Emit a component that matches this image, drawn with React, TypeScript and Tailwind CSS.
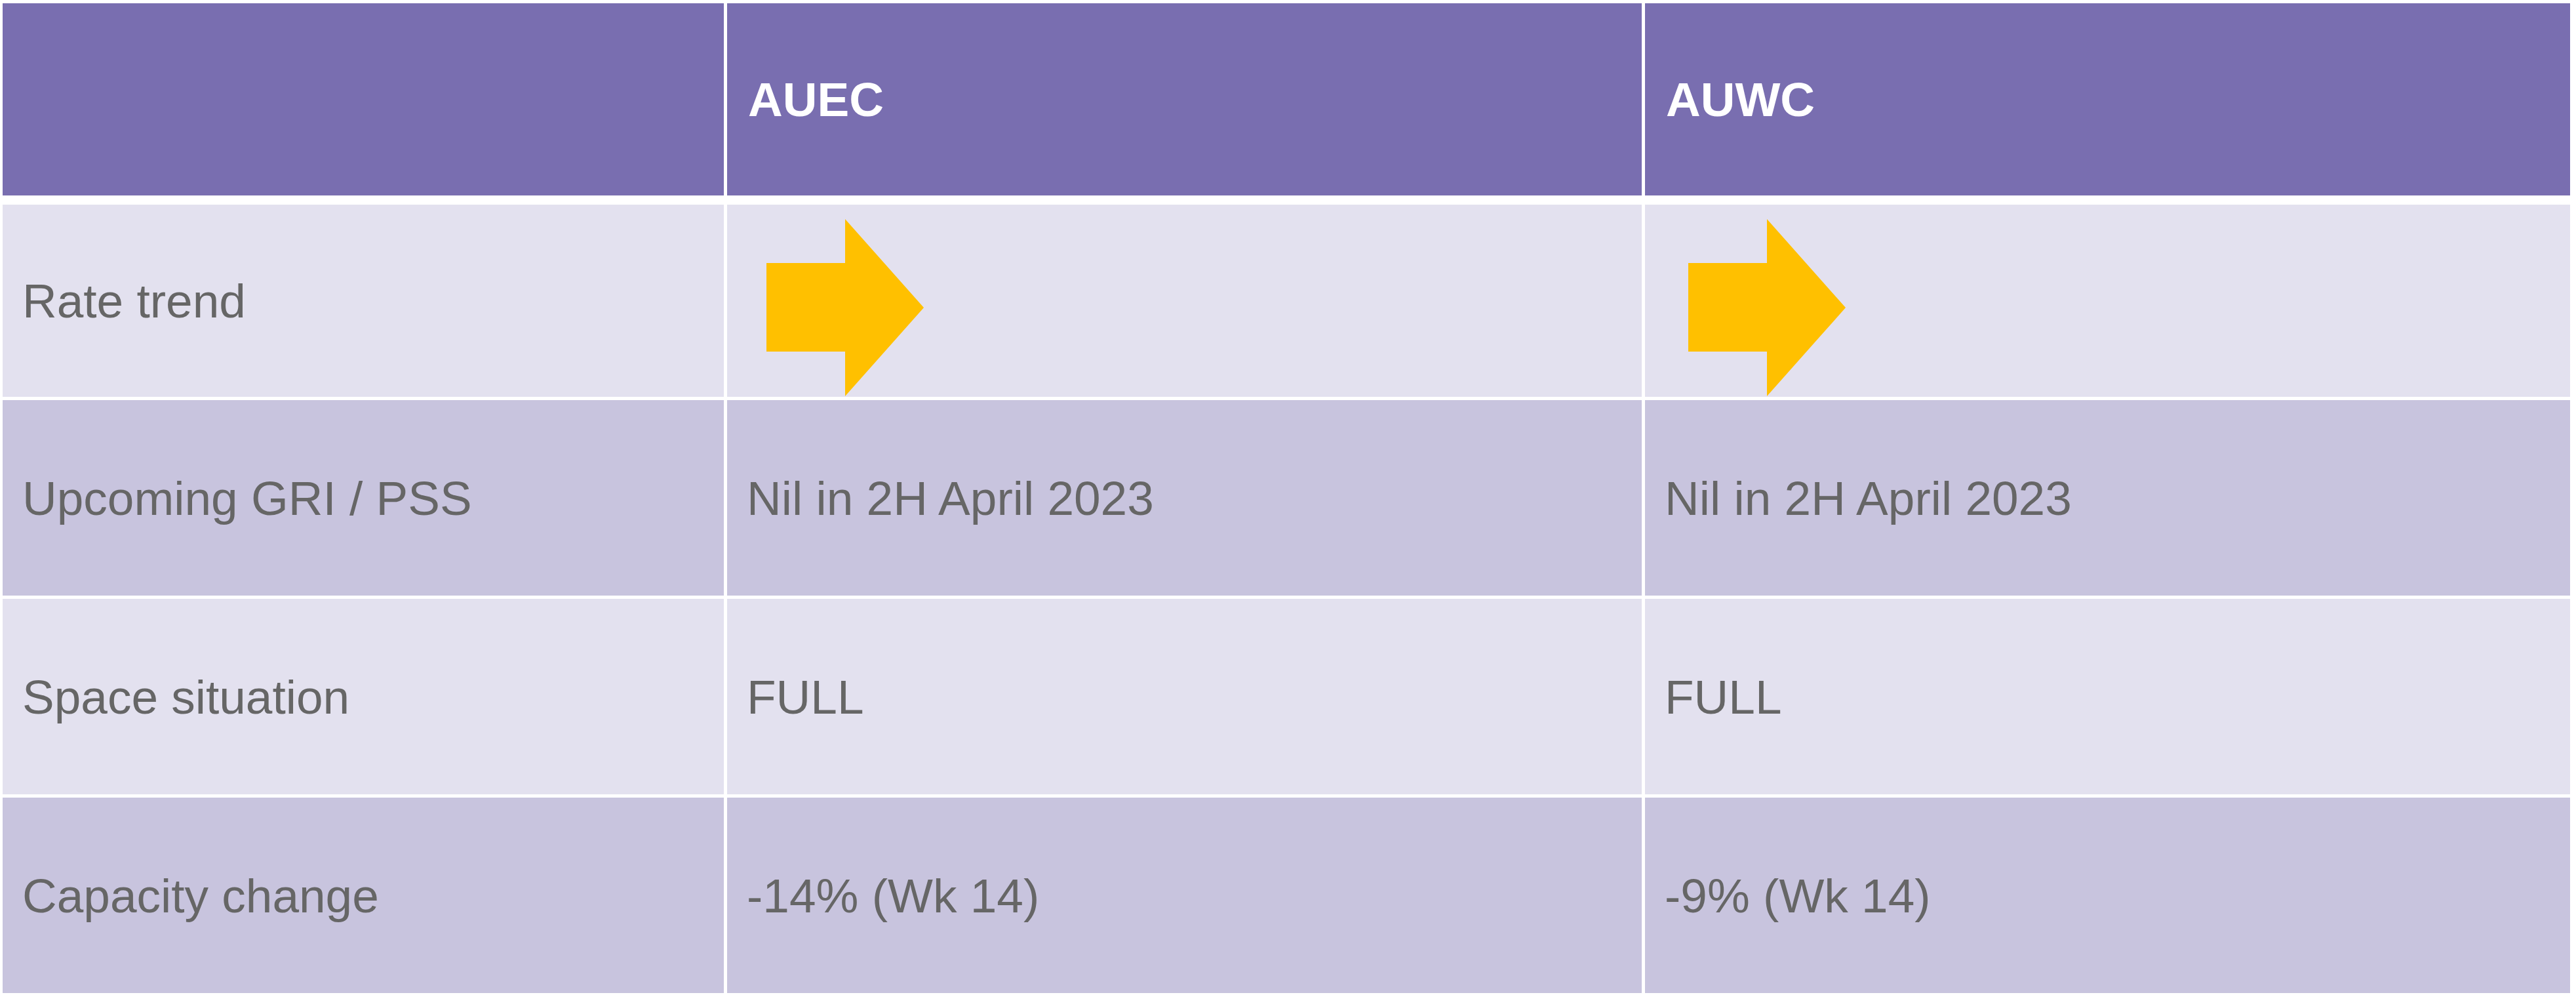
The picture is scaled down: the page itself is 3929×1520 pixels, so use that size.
import React from "react";

function Arrow() {
  return (
    <svg width="240" height="270" viewBox="0 0 240 270" className="block">
      <polygon points="0,67 120,67 120,0 240,135 120,270 120,202 0,202" fill="#FFC000" />
    </svg>
  );
}

const cols = "grid grid-cols-[1100px_1395px_1411px] gap-x-[5px]";

type Row = { label: string; a: string; b: string; dark: boolean };

const rows: Row[] = [
  { label: "Upcoming GRI / PSS", a: "Nil in 2H April 2023", b: "Nil in 2H April 2023", dark: true },
  { label: "Space situation", a: "FULL", b: "FULL", dark: false },
  { label: "Capacity change", a: "-14% (Wk 14)", b: "-9% (Wk 14)", dark: true },
];

export default function App() {
  return (
    <div
      className="w-[3929px] h-[1520px] bg-white pt-[5px] pl-[4px] overflow-hidden"
      style={{ fontFamily: '"Liberation Sans", Arial, sans-serif' }}
    >
      <div className="flex flex-col">
        {/* Header */}
        <div className={`${cols} h-[293px]`}>
          <div className="bg-[#796EB0]" />
          <div className="bg-[#796EB0] flex items-center pl-[32px] text-white font-bold text-[73px] leading-none">
            AUEC
          </div>
          <div className="bg-[#796EB0] flex items-center pl-[32px] text-white font-bold text-[73px] leading-none">
            AUWC
          </div>
        </div>

        {/* Rate trend */}
        <div className={`${cols} h-[293px] mt-[14px]`}>
          <div className="bg-[#E3E1EF] flex items-center pl-[30px] text-[#666666] text-[73px] leading-none">
            Rate trend
          </div>
          <div className="bg-[#E3E1EF] flex items-start pt-[22px] pl-[60px]">
            <Arrow />
          </div>
          <div className="bg-[#E3E1EF] flex items-start pt-[22px] pl-[66px]">
            <Arrow />
          </div>
        </div>

        {rows.map((r) => {
          const bg = r.dark ? "bg-[#C8C4DE]" : "bg-[#E3E1EF]";
          return (
            <div key={r.label} className={`${cols} h-[298px] mt-[5px]`}>
              <div className={`${bg} flex items-center pl-[30px] text-[#666666] text-[73px] leading-none`}>
                {r.label}
              </div>
              <div className={`${bg} flex items-center pl-[30px] text-[#666666] text-[73px] leading-none`}>
                {r.a}
              </div>
              <div className={`${bg} flex items-center pl-[30px] text-[#666666] text-[73px] leading-none`}>
                {r.b}
              </div>
            </div>
          );
        })}
      </div>
    </div>
  );
}
